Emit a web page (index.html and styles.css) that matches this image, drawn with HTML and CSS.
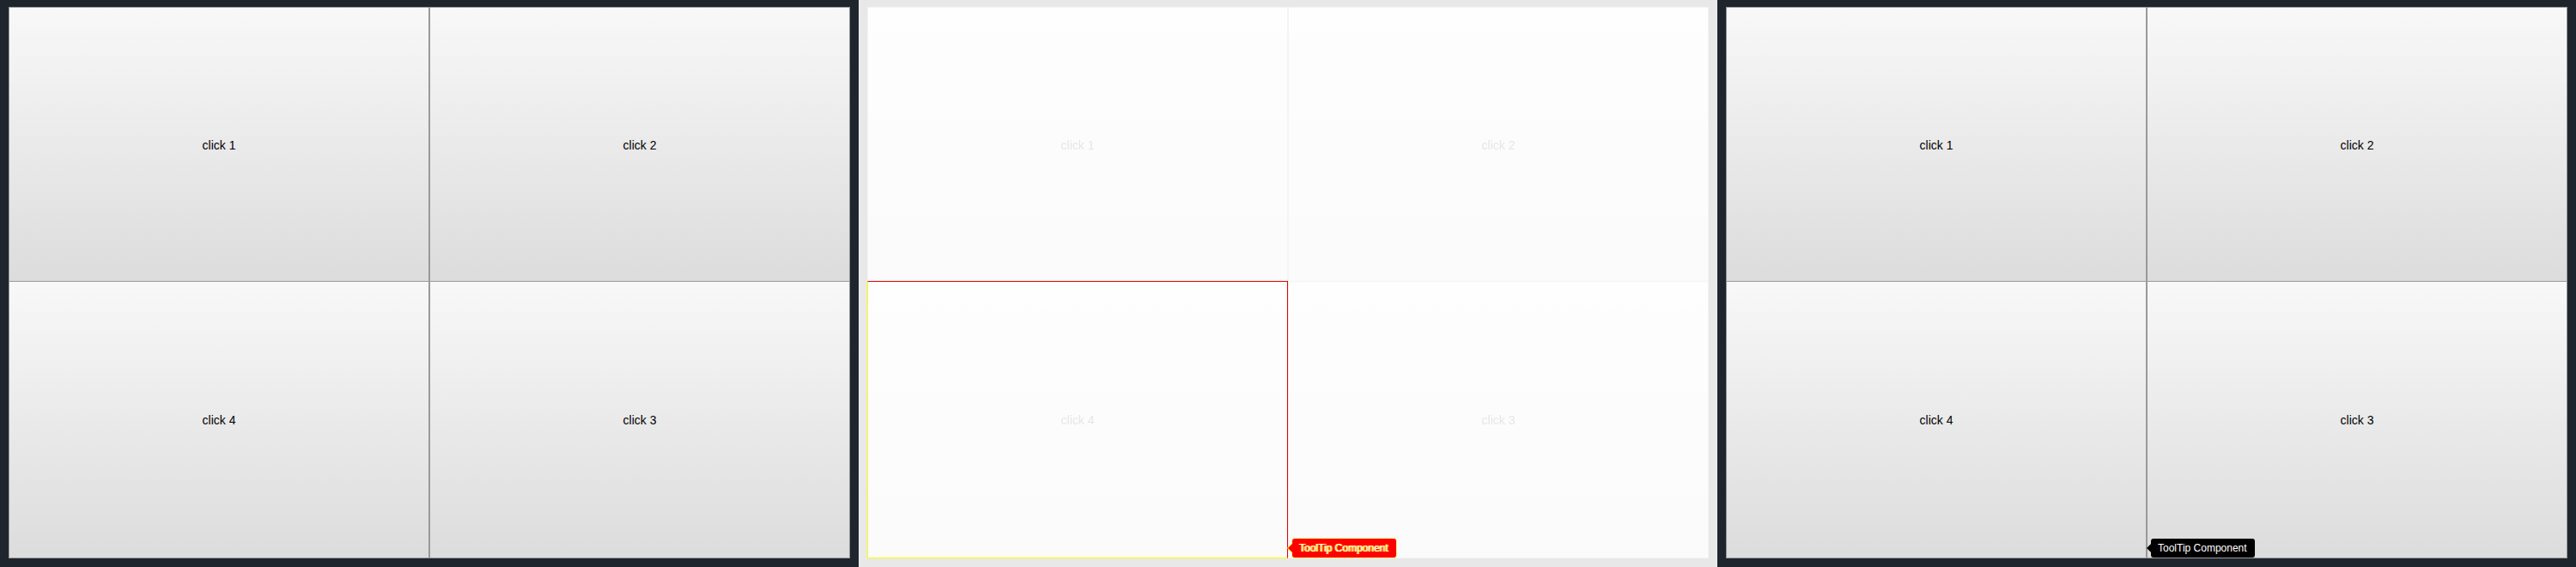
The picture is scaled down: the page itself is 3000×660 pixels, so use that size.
FILE: index.html
```html
<!DOCTYPE html>
<html>
<head>
<meta charset="utf-8">
<link rel="stylesheet" href="styles.css">
</head>
<body>
<div class="stage">
  <section class="panel dark">
    <div class="frame">
      <div class="grid">
        <div class="cell">click 1</div>
        <div class="cell">click 2</div>
        <div class="cell">click 4</div>
        <div class="cell">click 3</div>
      </div>
    </div>
  </section>

  <section class="panel light">
    <div class="frame white">
      <div class="grid ghost">
        <div class="cell">click 1</div>
        <div class="cell">click 2</div>
        <div class="cell">click 4</div>
        <div class="cell">click 3</div>
      </div>
    </div>
    <div class="highlight"></div>
    <div class="tooltip diff">ToolTip Component</div>
  </section>

  <section class="panel dark">
    <div class="frame">
      <div class="grid">
        <div class="cell">click 1</div>
        <div class="cell">click 2</div>
        <div class="cell">click 4</div>
        <div class="cell">click 3</div>
      </div>
    </div>
    <div class="tooltip">ToolTip Component</div>
  </section>
</div>
</body>
</html>
```

FILE: styles.css
```css
html, body {
  margin: 0;
  padding: 0;
}

body {
  width: 3000px;
  height: 660px;
  overflow: hidden;
  font-family: "Liberation Sans", Arial, sans-serif;
}

.stage {
  display: flex;
  width: 3000px;
  height: 660px;
}

.panel {
  position: relative;
  width: 1000px;
  height: 660px;
  box-sizing: border-box;
  padding: 8px 10px 10px 10px;
}

.panel.dark {
  background: #1f252d;
}

.panel.light {
  background: #e8e8e8;
}

.frame {
  width: 980px;
  height: 642px;
}

.frame.white {
  background: #ffffff;
}

.grid {
  display: grid;
  grid-template-columns: 488px 488px;
  grid-template-rows: 318px 321px;
  column-gap: 2px;
  row-gap: 1px;
  border: 1px solid #999999;
  background: #999999;
  width: 978px;
  height: 640px;
}

.grid.ghost {
  opacity: 0.1;
}

.cell {
  display: flex;
  align-items: center;
  justify-content: center;
  padding-top: 1px;
  background: linear-gradient(to bottom, #f8f8f8 0%, #dcdcdc 100%);
  color: #000000;
  font-size: 14px;
}

.highlight {
  position: absolute;
  left: 10px;
  top: 327px;
  box-sizing: border-box;
  width: 490px;
  height: 323px;
  border-top: 1px solid #e00000;
  border-right: 1px solid #e00000;
  border-left: 1px solid #ffff00;
  border-bottom: 1px solid #ffff00;
}

.tooltip {
  position: absolute;
  left: 505px;
  top: 627px;
  height: 22px;
  box-sizing: border-box;
  padding: 0 9px 0 8px;
  display: flex;
  align-items: center;
  background: #000000;
  color: #ffffff;
  font-size: 12px;
  border-radius: 3px;
  white-space: nowrap;
}

.tooltip::before {
  content: "";
  position: absolute;
  left: -5px;
  top: 6px;
  border-style: solid;
  border-width: 5px 5px 5px 0;
  border-color: transparent #000000 transparent transparent;
}

.tooltip.diff {
  background: #ff0000;
  color: #ffffff;
  box-shadow: 0 0 0 1px rgba(255, 255, 0, 0.45);
  text-shadow: 1px 0 0 rgba(255, 255, 0, 0.9), -1px 0 0 rgba(255, 255, 0, 0.6);
}

.tooltip.diff::before {
  border-color: transparent #ff0000 transparent transparent;
  filter: drop-shadow(-1px 0 0 #ffff00);
}
```
